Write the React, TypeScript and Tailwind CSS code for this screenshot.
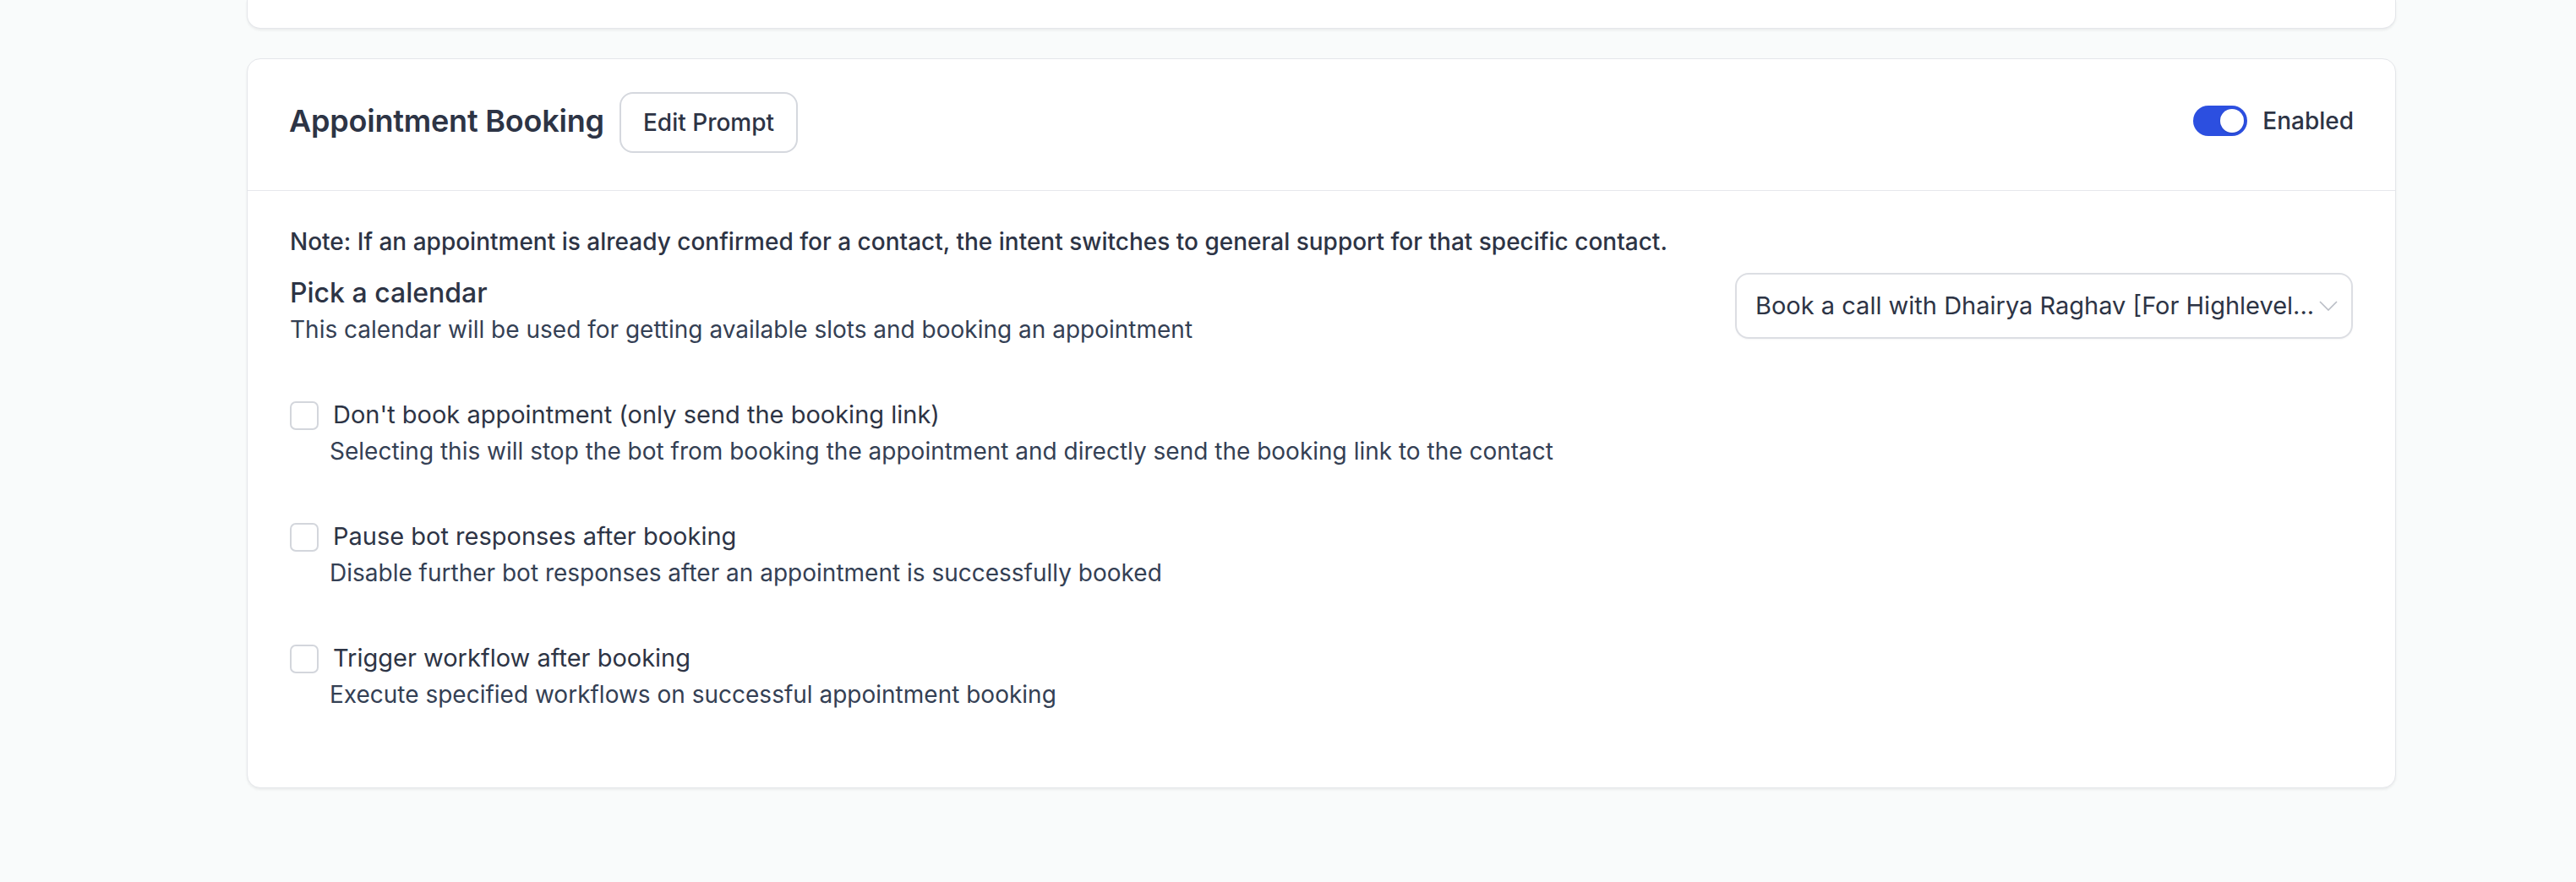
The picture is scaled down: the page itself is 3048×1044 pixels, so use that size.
import { useState } from 'react';

const options = [
  {
    label: "Don't book appointment (only send the booking link)",
    desc: 'Selecting this will stop the bot from booking the appointment and directly send the booking link to the contact',
  },
  {
    label: 'Pause bot responses after booking',
    desc: 'Disable further bot responses after an appointment is successfully booked',
  },
  {
    label: 'Trigger workflow after booking',
    desc: 'Execute specified workflows on successful appointment booking',
  },
];

function Toggle({ on, onChange }: { on: boolean; onChange: (v: boolean) => void }) {
  return (
    <button
      onClick={() => onChange(!on)}
      className={`relative h-[36px] w-[64px] rounded-full transition-colors ${on ? 'bg-[#2c4fe0]' : 'bg-gray-300'}`}
    >
      <span
        className={`absolute top-[4px] h-[28px] w-[28px] rounded-full bg-white shadow-sm transition-all ${
          on ? 'left-[32px]' : 'left-[4px]'
        }`}
      />
    </button>
  );
}

export default function App() {
  const [enabled, setEnabled] = useState(true);
  const [checked, setChecked] = useState<boolean[]>([false, false, false]);

  return (
    <div
      className="h-[1044px] w-full overflow-hidden bg-[#f9fbfb] text-[#2d3445]"
      style={{ fontFamily: 'Inter, "Noto Sans", sans-serif' }}
    >
      <div className="ml-[292px] w-[2543px]">
        {/* previous card, cut off at the top */}
        <div className="h-[34px] rounded-b-[16px] border border-t-0 border-[#e4e6ea] bg-white shadow-[0_2px_3px_rgba(0,0,0,0.06)]" />

        <div className="mt-[35px] rounded-[16px] border border-[#e4e6ea] bg-white shadow-[0_2px_3px_rgba(0,0,0,0.06)]">
          {/* header */}
          <div className="flex h-[156px] items-center justify-between border-b border-[#e6e8ec] px-[49px] pb-[10px]">
            <div className="flex items-center gap-[18px]">
              <h2 className="text-[36px] font-semibold leading-[44px] tracking-[-0.2px]">Appointment Booking</h2>
              <button className="mt-[4px] h-[72px] rounded-[16px] border-2 border-[#d5d8de] px-[26px] text-[28px] font-medium leading-none">
                Edit Prompt
              </button>
            </div>
            <div className="flex items-center gap-[18px]">
              <Toggle on={enabled} onChange={setEnabled} />
              <span className="text-[28px] font-medium">Enabled</span>
            </div>
          </div>

          {/* body */}
          <div className="px-[50px] pb-[90px] pt-[40px]">
            <p className="text-[28px] font-medium leading-[40px]">
              Note: If an appointment is already confirmed for a contact, the intent switches to general support for
              that specific contact.
            </p>

            <div className="mt-[19px] flex items-start justify-between">
              <div>
                <div className="text-[32px] font-medium leading-[44px]">Pick a calendar</div>
                <div className="mt-[1px] text-[28px] leading-[40px] text-[#344054]">
                  This calendar will be used for getting available slots and booking an appointment
                </div>
              </div>
              <button className="-mt-[2px] flex h-[78px] w-[731px] items-center justify-between rounded-[16px] border-2 border-[#dcdee3] pl-[22px] pr-[20px] text-[29px] shadow-[0_1px_2px_rgba(0,0,0,0.04)]">
                <span className="whitespace-nowrap">Book a call with Dhairya Raghav [For Highlevel...</span>
                <svg width="22" height="12" viewBox="0 0 22 12" fill="none" className="ml-[6px] shrink-0">
                  <path d="M1 1l10 10L21 1" stroke="#b8bcc4" strokeWidth="1.6" />
                </svg>
              </button>
            </div>

            {options.map((o, i) => (
              <div key={o.label} className="mt-[61px]">
                <label className="flex cursor-pointer items-center gap-[17px]">
                  <input
                    type="checkbox"
                    checked={checked[i]}
                    onChange={() => setChecked(checked.map((c, j) => (j === i ? !c : c)))}
                    className="mt-[2px] h-[34px] w-[34px] cursor-pointer appearance-none rounded-[7px] border-2 border-[#d3d6dc] bg-white checked:border-[#2c4fe0] checked:bg-[#2c4fe0]"
                  />
                  <span className="text-[29px] leading-[40px]">{o.label}</span>
                </label>
                <div className="mt-[3px] pl-[47px] text-[28px] leading-[40px] text-[#344054]">{o.desc}</div>
              </div>
            ))}
          </div>
        </div>
      </div>
    </div>
  );
}
